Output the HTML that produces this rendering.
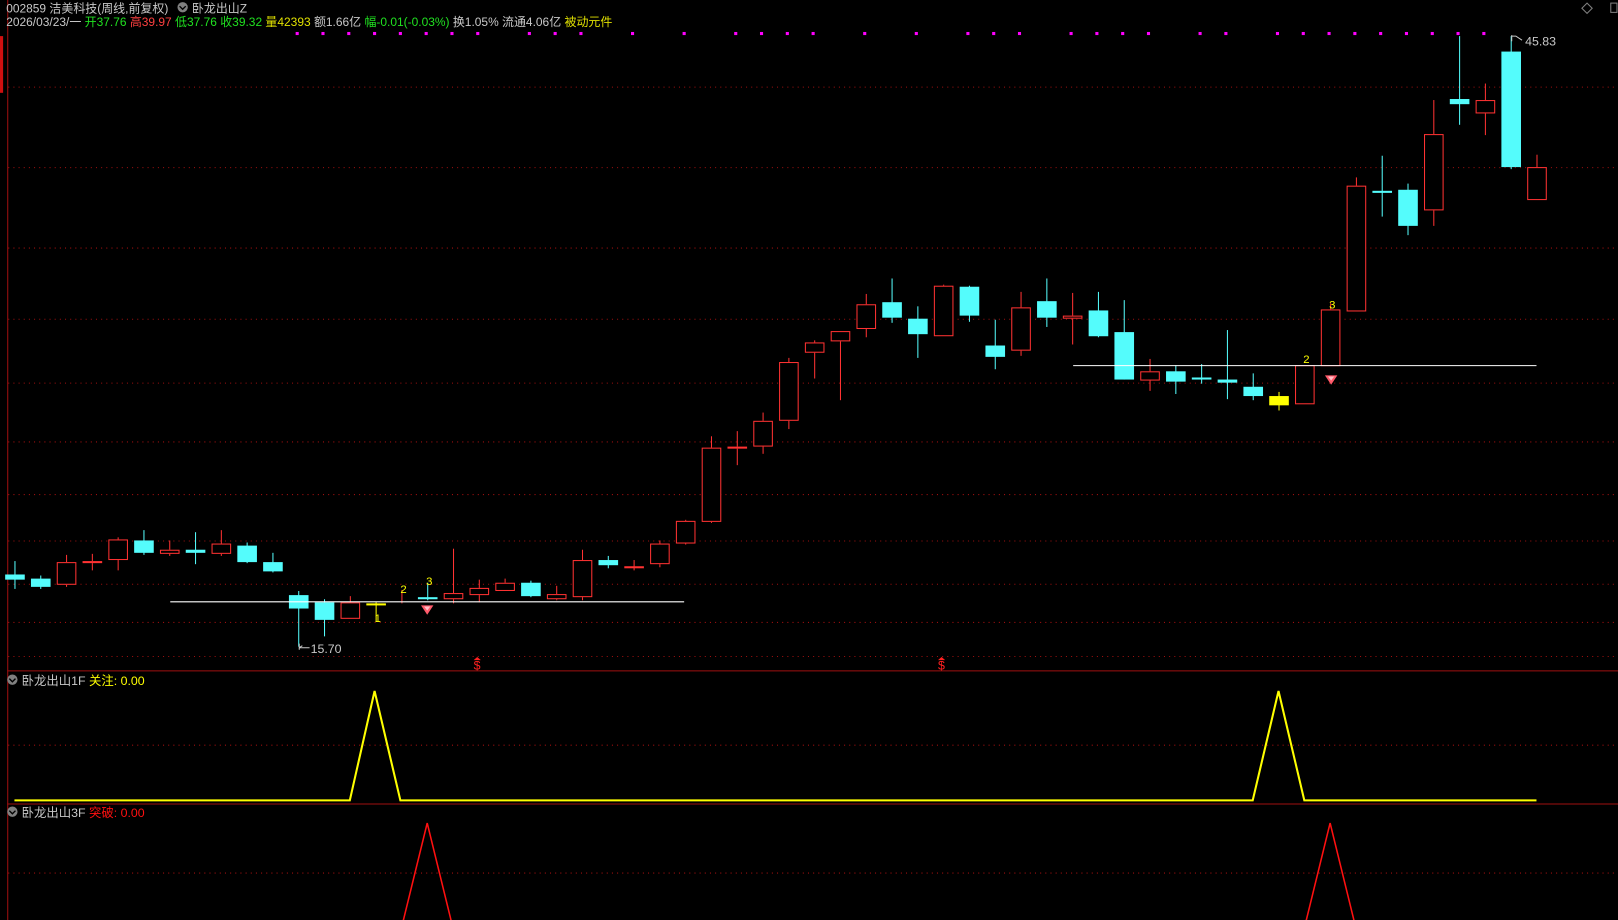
<!DOCTYPE html>
<html><head><meta charset="utf-8"><style>
html,body{margin:0;padding:0;background:#000;overflow:hidden;width:1618px;height:920px}
svg{display:block}
text{font-family:"Liberation Sans","WenQuanYi Zen Hei","Noto Sans CJK SC",sans-serif;font-size:12px}
.h{font-size:11.6px}
</style></head><body>
<svg id="s" width="1618" height="920" viewBox="0 0 1568 892" preserveAspectRatio="none" xmlns="http://www.w3.org/2000/svg">
<rect width="1568" height="892" fill="#000"/>
<g id="grid" stroke="#a01010" stroke-width="1" stroke-dasharray="1,4"></g>
<line x1="7.5" y1="0" x2="7.5" y2="892" stroke="#a01010"/>
<rect x="0" y="35" width="3" height="55" fill="#d01010"/>
<line x1="7" y1="650.5" x2="1568" y2="650.5" stroke="#a01010"/>
<line x1="7" y1="779.5" x2="1568" y2="779.5" stroke="#a01010"/>
<g id="dots" fill="#ff00ff"></g>
<g id="c"></g>
<line x1="165" y1="583.5" x2="663" y2="583.5" stroke="#fff"/>
<line x1="1040" y1="354.5" x2="1489" y2="354.5" stroke="#fff"/>
<g fill="#ffff00">
<text x="363" y="603" style="font-size:11px">1</text><text x="388" y="575" style="font-size:11px">2</text><text x="413" y="567" style="font-size:11px">3</text>
<text x="1263" y="352" style="font-size:11px">2</text><text x="1288" y="299" style="font-size:11px">3</text>
</g>
<g fill="#ff5a6a"><path d="M408 587h12l-6 9z"/><path d="M1284 364h12l-6 9z"/></g>
<g fill="#ffc0c8"><path d="M411 588h6l-3 4z"/><path d="M1287 365h6l-3 4z"/></g>
<text x="301" y="633" fill="#c8c8c8">15.70</text>
<path d="M290 624v6M290 628h10M290 628l3-2" stroke="#c8c8c8" fill="none"/>
<text x="1478" y="44" fill="#c8c8c8">45.83</text>
<path d="M1465 34v6M1465 35h4l6 4" stroke="#c8c8c8" fill="none"/>
<text x="459" y="649" fill="#ff2020">$</text><path d="M459 640h7l-3.5-3z" fill="#ff2020"/>
<text x="909" y="649" fill="#ff2020">$</text><path d="M909 640h7l-3.5-3z" fill="#ff2020"/>
<!-- header -->
<text class="h" x="6" y="12" fill="#c8c8c8">002859 洁美科技(周线,前复权)</text>
<circle cx="177" cy="7" r="5" fill="#808080"/><path d="M174 6l3 3 3-3" stroke="#000" fill="none" stroke-width="1.3"/>
<text class="h" x="186" y="12" fill="#c8c8c8">卧龙出山Z</text>
<text class="h" x="6" y="25"><tspan fill="#c8c8c8">2026/03/23/一 </tspan><tspan fill="#20e020">开37.76 </tspan><tspan fill="#ff4040">高39.97 </tspan><tspan fill="#20e020">低37.76 收39.32 </tspan><tspan fill="#e0e000">量42393 </tspan><tspan fill="#c8c8c8">额1.66亿 </tspan><tspan fill="#20e020">幅-0.01(-0.03%) </tspan><tspan fill="#c8c8c8">换1.05% 流通4.06亿 </tspan><tspan fill="#e0e000">被动元件</tspan></text>
<path d="M1538 3l5 5-5 5-5-5z" stroke="#808080" fill="none"/>
<rect x="1561" y="3" width="6" height="9" stroke="#808080" fill="none"/>
<!-- panel 2 -->
<circle cx="12" cy="659" r="5" fill="#808080"/><path d="M9 658l3 3 3-3" stroke="#000" fill="none" stroke-width="1.3"/>
<text x="21" y="664" fill="#c8c8c8">卧龙出山1F <tspan fill="#ffff00">关注: 0.00</tspan></text>
<line x1="8" y1="722.5" x2="1568" y2="722.5" stroke="#a01010" stroke-dasharray="1,4"/>
<polyline points="14,776 339,776 363,670 388,776 1214,776 1239,670 1264,776 1489,776" stroke="#ffff00" stroke-width="2" fill="none"/>
<!-- panel 3 -->
<circle cx="12" cy="787" r="5" fill="#808080"/><path d="M9 786l3 3 3-3" stroke="#000" fill="none" stroke-width="1.3"/>
<text x="21" y="792" fill="#c8c8c8">卧龙出山3F <tspan fill="#ff1010">突破: 0.00</tspan></text>
<line x1="8" y1="846.5" x2="1568" y2="846.5" stroke="#a01010" stroke-dasharray="1,4"/>
<polyline points="389,900 414,798 439,900" stroke="#ff1010" stroke-width="1.5" fill="none"/>
<polyline points="1264,900 1289,798 1314,900" stroke="#ff1010" stroke-width="1.5" fill="none"/>
</svg>
<script>
var NS="http://www.w3.org/2000/svg";
function el(p,t,a){var e=document.createElementNS(NS,t);for(var k in a)e.setAttribute(k,a[k]);p.appendChild(e);return e;}
var g=document.getElementById('grid');
[84,162,240,309,371,428,479,524,566,603,636].forEach(function(y){el(g,'line',{x1:8,x2:1568,y1:y+.5,y2:y+.5});});
var d=document.getElementById('dots');
[288,313,338,363,388,413,438,463,513,538,563,613,663,713,738,763,788,838,888,938,963,988,1038,1063,1088,1113,1163,1188,1238,1263,1288,1313,1338,1363,1388,1413,1438].forEach(function(x){el(d,'rect',{x:x-1.5,y:31,width:3,height:3});});
var C=[
['c',544,571,557,562],['c',558,571,561,569],['r',538,569,545,567],['r',537,553,544,546],['r',521,553,523,543],
['c',514,538,524,536],['r',524,539,533,537],['c',516,547,533,536],['r',514,539,527,537],['c',526,546,529,545],
['c',536,555,545,554],['c',573,627,577,590],['c',581,617,584,601],['r',578,600,584,600],['y',584,603,585,587],
['r',572,585,585,585],['c',565,582,579,581],['r',532,585,575,581],['r',562,584,570,577],['r',561,573,565,573],
['c',563,579,565,578],['r',568,582,576,581],['r',533,582,543,579],['c',539,551,543,548],['rf',543,553,549,551],
['r',524,550,527,547],['r',504,528,505,527],['r',423,507,434,506],['r',418,451,433,435],['r',400,440,408,433],
['r',347,416,351,408],['r',330,367,332,342],['r',321,388,321,331],['r',285,327,295,319],['c',270,313,293,308],
['c',297,347,309,324],['r',276,326,277,326],['c',277,312,278,306],['c',310,358,335,346],['r',283,345,298,340],
['c',270,317,292,308],['r',284,334,306,309],['c',283,327,301,326],['c',291,368,322,368],['r',348,379,360,369],
['c',354,382,360,370],['c',353,372,366,368],['c',320,387,368,371],['c',362,388,375,384],['y',380,398,384,393],
['r',354,392,354,392],['r',294,355,300,355],['r',172,302,180,302],['c',151,210,185,187],['c',178,228,184,219],
['r',97,219,130,204],['c',35,121,96,101],['r',81,131,97,110],['c',35,164,50,162],['r',150,194,162,194]];
var cg=document.getElementById('c');
C.forEach(function(k,i){
 var x=14+25*i,t=k[0],col=t=='c'?'#54fcfc':(t=='y'?'#ffff00':'#ff3232');
 var top=k[3],bot=k[4];
 if(t=='r'){
  el(cg,'line',{x1:x+.5,x2:x+.5,y1:k[1],y2:top,stroke:col});
  el(cg,'line',{x1:x+.5,x2:x+.5,y1:bot,y2:k[2],stroke:col});
  if(bot-top<1){ if(i!=15) el(cg,'line',{x1:x-9,x2:x+9,y1:top+.5,y2:top+.5,stroke:col}); }
  else el(cg,'rect',{x:x-8.5,y:top+.5,width:18,height:bot-top-1,fill:'#000',stroke:col});
 } else {
  el(cg,'line',{x1:x+.5,x2:x+.5,y1:k[1],y2:k[2],stroke:col});
  el(cg,'rect',{x:x-9,y:top,width:19,height:Math.max(2,bot-top),fill:col});
 }
});
</script>
</body></html>
